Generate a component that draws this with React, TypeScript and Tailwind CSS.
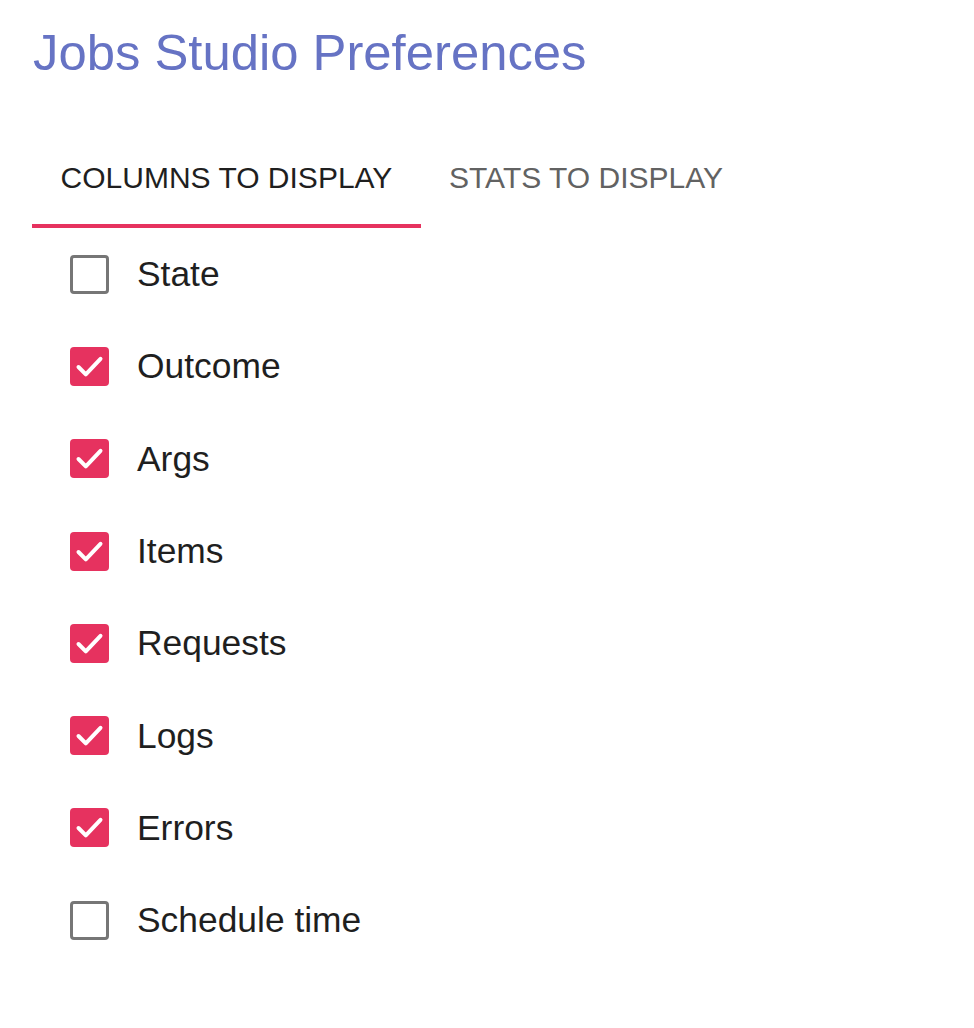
import React, { useState } from "react";

const columns = [
  { label: "State", checked: false },
  { label: "Outcome", checked: true },
  { label: "Args", checked: true },
  { label: "Items", checked: true },
  { label: "Requests", checked: true },
  { label: "Logs", checked: true },
  { label: "Errors", checked: true },
  { label: "Schedule time", checked: false },
];

const Box = ({ checked }: { checked: boolean }) => {
  if (!checked) {
    return <div className="h-[39px] w-[39px] shrink-0 rounded-[4px] border-[3.5px] border-[#767676] bg-white" />;
  }
  return (
    <div className="flex h-[39px] w-[39px] shrink-0 items-center justify-center rounded-[4px] bg-[#e6325f]">
      <svg width="39" height="39" viewBox="0 0 39 39" fill="none">
        <path d="M8.5 20 L15.8 27.3 L30.5 11.8" stroke="white" strokeWidth="4" strokeLinecap="round" strokeLinejoin="round" />
      </svg>
    </div>
  );
};

export default function App() {
  const [tab, setTab] = useState(0);
  const [items, setItems] = useState(columns);

  return (
    <div className="min-h-screen w-full bg-white pl-[32px] pt-[23px]" style={{ fontFamily: '"Liberation Sans", Arial, sans-serif' }}>
      <h1 className="pl-[1px] text-[50.8px] leading-[60px] font-normal text-[#6673c4]">Jobs Studio Preferences</h1>

      <div className="mt-[49px] flex">
        <button
          onClick={() => setTab(0)}
          className={"relative flex h-[96px] w-[389px] items-center justify-center pb-[4px] text-[30px] leading-[36px] uppercase " + (tab === 0 ? "text-[#1f1f1f]" : "text-[#626262]")}
        >
          Columns to display
          {tab === 0 && <span className="absolute bottom-0 left-0 h-[4px] w-full bg-[#e6325f]" />}
        </button>
        <button
          onClick={() => setTab(1)}
          className={"relative flex h-[96px] w-[330px] items-center justify-center pb-[4px] text-[30px] leading-[36px] uppercase " + (tab === 1 ? "text-[#1f1f1f]" : "text-[#626262]")}
        >
          Stats to display
          {tab === 1 && <span className="absolute bottom-0 left-0 h-[4px] w-full bg-[#e6325f]" />}
        </button>
      </div>

      <div className="flex flex-col pl-[38px]">
        {items.map((c, i) => (
          <label
            key={c.label}
            className="flex h-[92.3px] cursor-pointer items-center gap-[28px]"
            onClick={() => setItems(items.map((x, j) => (j === i ? { ...x, checked: !x.checked } : x)))}
          >
            <Box checked={c.checked} />
            <span className="text-[35.4px] leading-[42px] text-[#1f1f1f]">{c.label}</span>
          </label>
        ))}
      </div>
    </div>
  );
}
